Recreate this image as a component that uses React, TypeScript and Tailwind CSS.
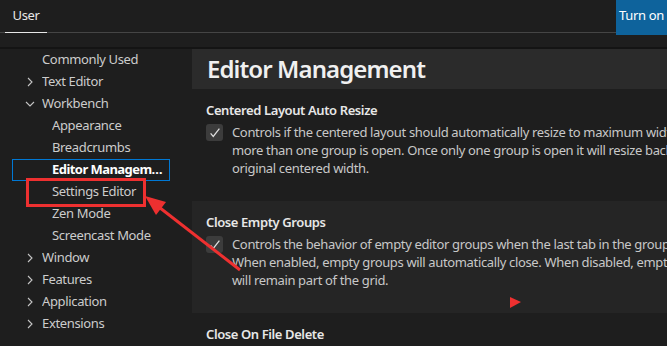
import React from 'react';

const font = { fontFamily: '"Noto Sans", "Open Sans", sans-serif' };

const navItems: { label: string; level: number; chevron?: 'right' | 'down'; focused?: boolean }[] = [
    { label: 'Commonly Used', level: 0 },
    { label: 'Text Editor', level: 0, chevron: 'right' },
    { label: 'Workbench', level: 0, chevron: 'down' },
    { label: 'Appearance', level: 1 },
    { label: 'Breadcrumbs', level: 1 },
    { label: 'Editor Management', level: 1, focused: true },
    { label: 'Settings Editor', level: 1 },
    { label: 'Zen Mode', level: 1 },
    { label: 'Screencast Mode', level: 1 },
    { label: 'Window', level: 0, chevron: 'right' },
    { label: 'Features', level: 0, chevron: 'right' },
    { label: 'Application', level: 0, chevron: 'right' },
    { label: 'Extensions', level: 0, chevron: 'right' },
];

const Chevron: React.FC<{ dir: 'right' | 'down' }> = ({ dir }) => (
    <svg width="16" height="16" viewBox="0 0 16 16" className="shrink-0">
        {dir === 'right' ? (
            <path d="M6 4l4 4-4 4" fill="none" stroke="#c5c5c5" strokeWidth="1.1" />
        ) : (
            <path d="M4 6l4 4 4-4" fill="none" stroke="#c5c5c5" strokeWidth="1.1" />
        )}
    </svg>
);

const Check = () => (
    <div className="w-[17px] h-[17px] mt-[1px] shrink-0 rounded-[3px] bg-[#3c3c3c] flex items-center justify-center">
        <svg width="14" height="14" viewBox="0 0 16 16">
            <path d="M3 8.5l3 3.5L13 3" fill="none" stroke="#e0e0e0" strokeWidth="1.4" />
        </svg>
    </div>
);

const Setting: React.FC<{ title: string; lines: string[]; hover?: boolean }> = ({ title, lines, hover }) => (
    <div className={`h-[112px] pl-[14px] pt-[12px] ${hover ? 'bg-[#252525]' : ''}`}>
        <div className="text-[13px] leading-[18px] font-semibold tracking-[-0.4px] text-[#e7e7e7] whitespace-nowrap">{title}</div>
        <div className="flex gap-[9px] mt-[4px]">
            <Check />
            <div className="text-[13px] leading-[18px] text-[#c8c8c8] whitespace-nowrap">
                {lines.map(l => (
                    <div key={l}>{l}</div>
                ))}
            </div>
        </div>
    </div>
);

export default function App() {
    return (
        <div className="relative w-[667px] h-[346px] overflow-hidden bg-[#1e1e1e] tracking-[-0.35px]" style={font}>
            {/* tab bar */}
            <div className="h-[33px] flex items-start border-b border-[#454545] relative">
                <div className="ml-[5px] w-[42px] h-[33px] border-b border-[#e7e7e7] flex items-center justify-center -mb-px">
                    <span className="text-[13px] text-[#e7e7e7]">User</span>
                </div>
                <div className="ml-auto w-[51px] h-[35px] bg-[#0e639c] text-[13px] text-white pl-[3px] pt-[6px] whitespace-nowrap">
                    Turn on
                </div>
            </div>
            <div className="h-[14px]" />
            <div className="h-[2px] bg-[#141414]" />

            <div className="flex">
                {/* nav */}
                <div className="w-[192px] shrink-0">
                    {navItems.map(item => (
                        <div
                            key={item.label}
                            className={`h-[22px] flex items-center text-[13px] ${item.focused ? 'ml-[12px] w-[158px] border border-[#0078d4] font-bold tracking-[-0.55px] text-white' : 'text-[#cccccc]'}`}
                        >
                            {item.chevron ? (
                                <div className="ml-[22px] w-[20px] flex">
                                    <Chevron dir={item.chevron} />
                                </div>
                            ) : (
                                <div className={item.focused ? 'w-[39px] shrink-0' : item.level === 1 ? 'w-[52px] shrink-0' : 'w-[42px] shrink-0'} />
                            )}
                            <span className="truncate whitespace-nowrap pr-[3px]">{item.label}</span>
                        </div>
                    ))}
                </div>

                {/* content */}
                <div className="flex-1 min-w-0">
                    <div className="h-[40px] bg-[#2b2b2b] pl-[15px] flex items-center">
                        <span className="text-[24px] font-semibold tracking-[-0.9px] text-[#f0f0f0] whitespace-nowrap">Editor Management</span>
                    </div>
                    <Setting
                        title="Centered Layout Auto Resize"
                        lines={[
                            'Controls if the centered layout should automatically resize to maximum width when',
                            'more than one group is open. Once only one group is open it will resize back to the',
                            'original centered width.',
                        ]}
                    />
                    <Setting
                        hover
                        title="Close Empty Groups"
                        lines={[
                            'Controls the behavior of empty editor groups when the last tab in the group is closed.',
                            'When enabled, empty groups will automatically close. When disabled, empty groups',
                            'will remain part of the grid.',
                        ]}
                    />
                    <Setting title="Close On File Delete" lines={[]} />
                </div>
            </div>

            {/* annotations */}
            <div className="absolute left-[26px] top-[178px] w-[120px] h-[29px] border-[3px] border-[#ee3030]" />
            <svg className="absolute inset-0 pointer-events-none" width="667" height="346">
                <line x1="240" y1="270" x2="155" y2="204" stroke="#ee3030" strokeWidth="3" />
                <polygon points="145,196 166,202 156,215" fill="#ee3030" />
                <polygon points="510,297 521,302 510,308" fill="#ee3030" />
            </svg>
        </div>
    );
}
